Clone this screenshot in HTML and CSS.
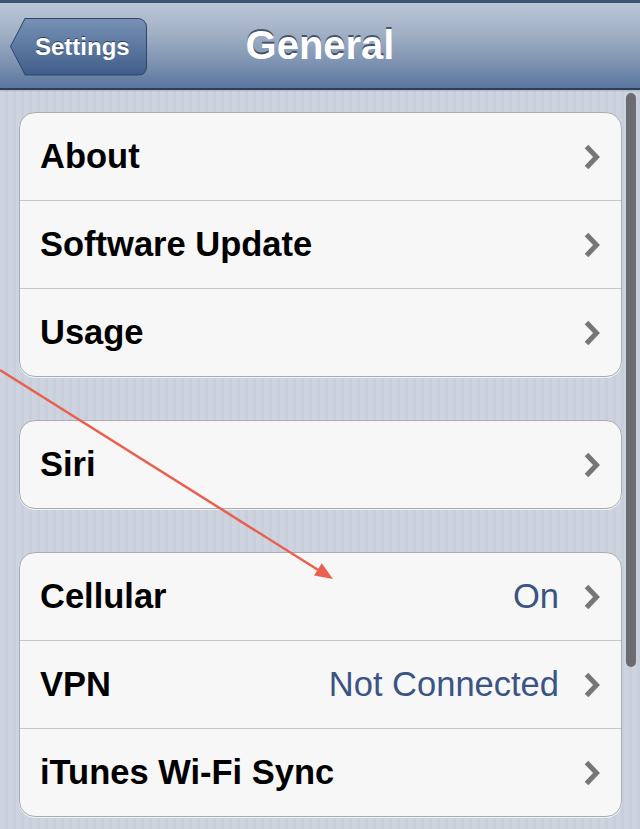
FILE: index.html
```html
<!DOCTYPE html>
<html>
<head>
<meta charset="utf-8">
<link rel="stylesheet" href="styles.css">
</head>
<body>
<div class="screen">
  <header class="nav">
    <div class="nav-left">
      <div class="back"><div class="back-inner"><span>Settings</span></div></div>
    </div>
    <h1 class="title">General</h1>
    <div class="nav-right"></div>
  </header>
  <main class="content">
    <section class="group">
      <div class="row"><span class="label">About</span><span class="chev"><svg viewBox="0 0 16 26" width="16" height="26"><polyline points="2.5,2.5 12.5,13 2.5,23.5"/></svg></span></div>
      <div class="row"><span class="label">Software Update</span><span class="chev"><svg viewBox="0 0 16 26" width="16" height="26"><polyline points="2.5,2.5 12.5,13 2.5,23.5"/></svg></span></div>
      <div class="row"><span class="label">Usage</span><span class="chev"><svg viewBox="0 0 16 26" width="16" height="26"><polyline points="2.5,2.5 12.5,13 2.5,23.5"/></svg></span></div>
    </section>
    <section class="group">
      <div class="row"><span class="label">Siri</span><span class="chev"><svg viewBox="0 0 16 26" width="16" height="26"><polyline points="2.5,2.5 12.5,13 2.5,23.5"/></svg></span></div>
    </section>
    <section class="group">
      <div class="row"><span class="label">Cellular</span><span class="value">On</span><span class="chev"><svg viewBox="0 0 16 26" width="16" height="26"><polyline points="2.5,2.5 12.5,13 2.5,23.5"/></svg></span></div>
      <div class="row"><span class="label">VPN</span><span class="value">Not Connected</span><span class="chev"><svg viewBox="0 0 16 26" width="16" height="26"><polyline points="2.5,2.5 12.5,13 2.5,23.5"/></svg></span></div>
      <div class="row"><span class="label">iTunes Wi-Fi Sync</span><span class="chev"><svg viewBox="0 0 16 26" width="16" height="26"><polyline points="2.5,2.5 12.5,13 2.5,23.5"/></svg></span></div>
    </section>
  </main>
  <div class="scrollbar"></div>
  <svg class="annotation" viewBox="0 0 640 829" width="640" height="829">
    <line x1="0" y1="370" x2="319" y2="570.5" />
    <polygon points="333,579 314,575.5 321.8,563.2" />
  </svg>
</div>
</body>
</html>
```

FILE: styles.css
```css
html, body {
  margin: 0;
  padding: 0;
}
body {
  width: 640px;
  height: 829px;
  overflow: hidden;
  font-family: "Liberation Sans", Arial, Helvetica, sans-serif;
  background: #cbd2dd;
}
.screen {
  position: relative;
  width: 640px;
  height: 829px;
  overflow: hidden;
  background: repeating-linear-gradient(90deg, #ced4df 0 5px, #c8cfda 5px 8px);
}
.nav {
  height: 85px;
  border-top: 3px solid #3d5476;
  border-bottom: 2px solid #2d3e5a;
  background: linear-gradient(#bac6d6 0%, #a2b1c5 35%, #7d93b1 70%, #5a769e 100%);
  display: grid;
  grid-template-columns: 1fr auto 1fr;
  align-items: center;
  box-shadow: 0 1px 2px rgba(0,0,0,0.15);
}
.nav-left {
  display: flex;
  align-items: center;
  padding-left: 10px;
}
.back {
  width: 137px;
  height: 58px;
  margin-top: 2px;
  padding: 1px;
  box-sizing: border-box;
  display: flex;
  background: #2f4467;
  border-radius: 0 9px 9px 0;
  clip-path: polygon(15px 0, 100% 0, 100% 100%, 15px 100%, 0 50%);
}
.back-inner {
  flex: 1;
  display: flex;
  align-items: center;
  justify-content: flex-start;
  padding-left: 24px;
  border-radius: 0 8px 8px 0;
  clip-path: polygon(14.5px 0, 100% 0, 100% 100%, 14.5px 100%, 0 50%);
  background: linear-gradient(#7790b3 0%, #5c789f 50%, #3f5d8a 100%);
}
.back-inner span {
  color: #fff;
  font-weight: bold;
  font-size: 24px;
  text-shadow: 0 -1px 0 rgba(20,30,50,0.7);
}
.title {
  margin: 0;
  color: #fff;
  font-size: 40px;
  font-weight: bold;
  text-shadow: 0 -2px 0 rgba(40,55,80,0.75);
  padding-bottom: 1px;
}
.content {
  padding: 22px 18px 0 19px;
}
.group {
  background: #f7f7f7;
  border: 1px solid #a9acb0;
  border-radius: 16px;
  margin-bottom: 43px;
  box-shadow: 0 1px 0 rgba(255,255,255,0.7);
  overflow: hidden;
}
.row {
  height: 87px;
  display: flex;
  align-items: center;
  padding: 0 21px 0 20px;
}
.row + .row {
  border-top: 1px solid #c7c7c9;
}
.label {
  flex: 1;
  font-size: 34.5px;
  font-weight: bold;
  color: #000;
}
.value {
  font-size: 34.5px;
  color: #3a5483;
  margin-right: 25px;
}
.chev {
  display: flex;
  width: 16px;
  height: 26px;
}
.chev svg polyline {
  fill: none;
  stroke: #767676;
  stroke-width: 5;
  stroke-linejoin: miter;
  stroke-linecap: butt;
}
.scrollbar {
  position: absolute;
  left: 626px;
  top: 93px;
  width: 10px;
  height: 574px;
  border-radius: 5px;
  background: #6b6c71;
}
.annotation {
  position: absolute;
  left: 0;
  top: 0;
  pointer-events: none;
}
.annotation line {
  stroke: #ea604f;
  stroke-width: 2.5;
}
.annotation polygon {
  fill: #ea604f;
}
```
